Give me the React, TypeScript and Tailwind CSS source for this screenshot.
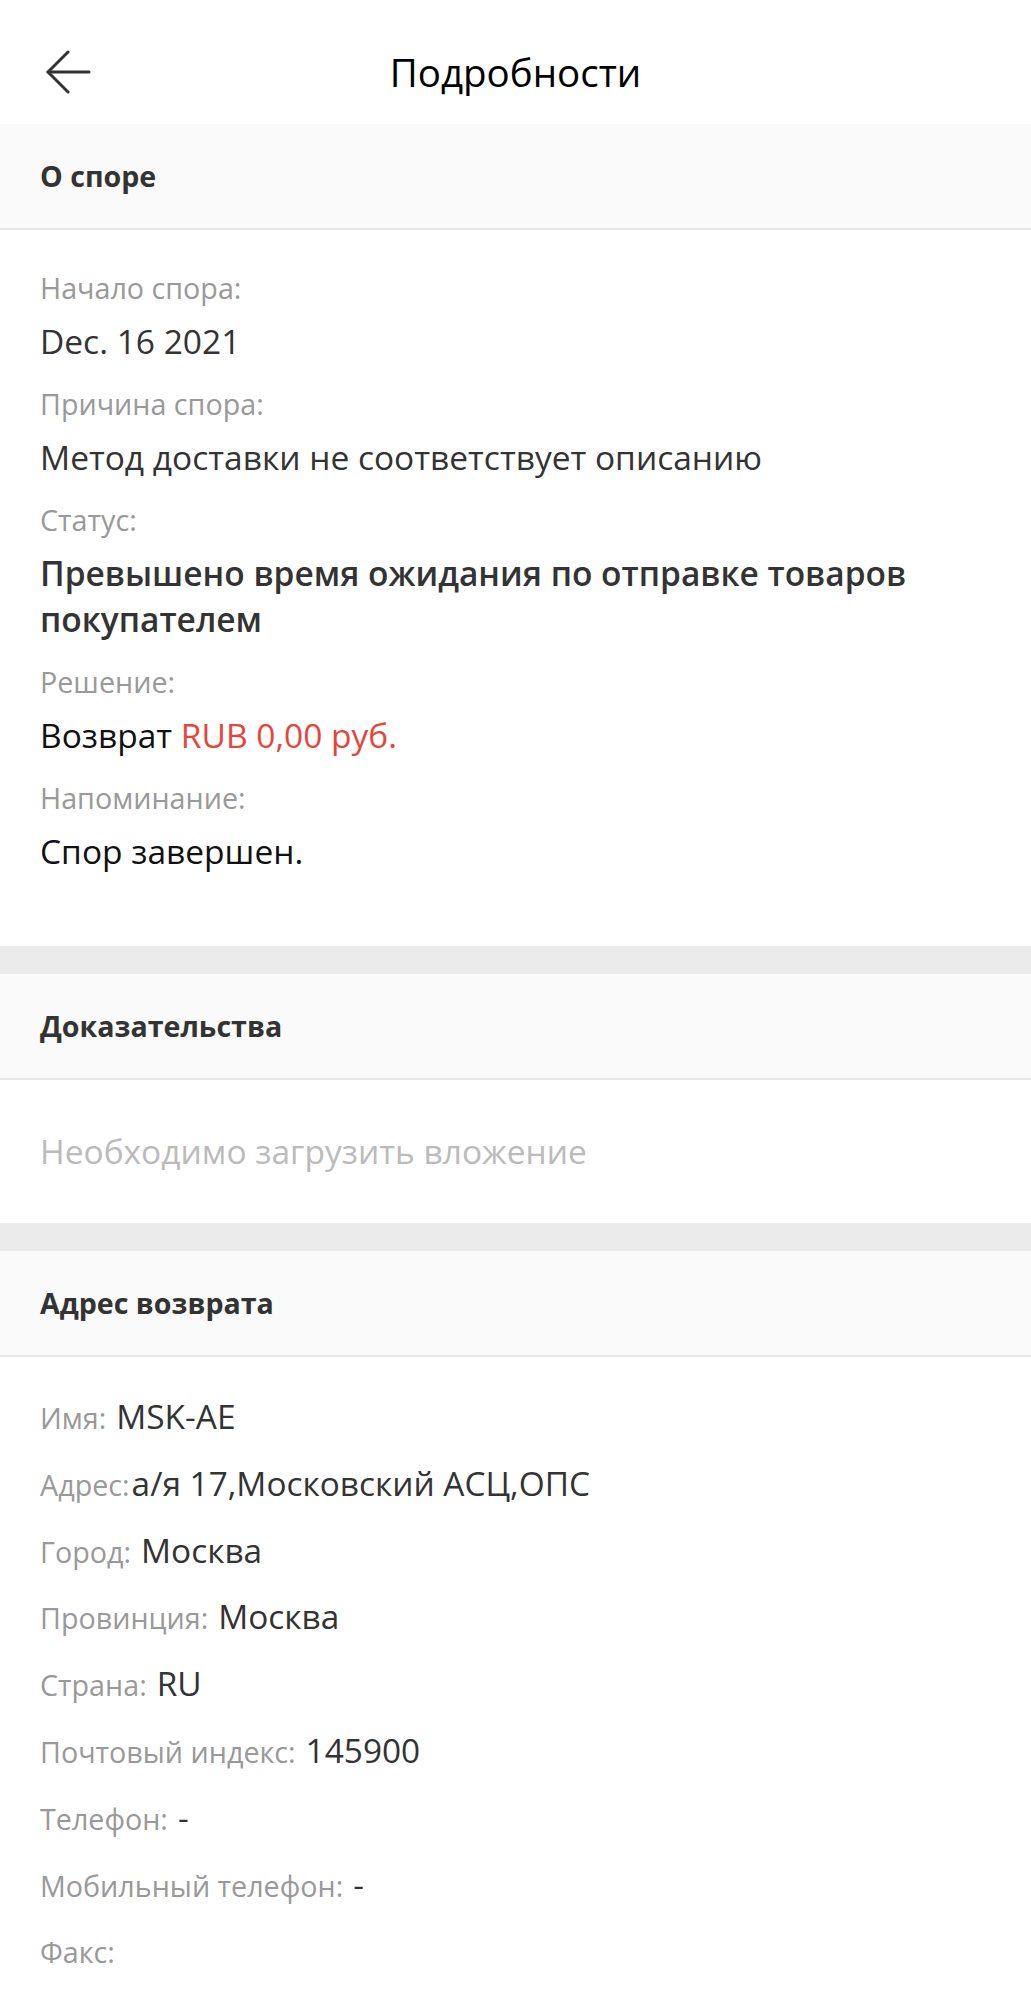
import React from "react";

const Label = ({ children }: { children: React.ReactNode }) => (
  <div className="text-[28.7px] leading-[44px] text-[#999999]">{children}</div>
);

const SectionHeader = ({ title }: { title: string }) => (
  <div className="h-[106px] bg-[#fafafa] border-b-2 border-[#e8e8e8] px-[40px] flex items-center">
    <span className="text-[28.6px] font-bold text-[#333333]">{title}</span>
  </div>
);

const Band = () => <div className="h-[28px] bg-[#ebebeb]" />;

const AddrRow = ({ label, value, tight }: { label: string; value: string; tight?: boolean }) => (
  <div className="text-[28.7px] leading-[66.8px] whitespace-nowrap">
    <span className="leading-none text-[#999999]">{label}</span>
    <span className={(tight ? "ml-[2px] " : "ml-[10px] ") + "leading-none text-[33.4px] text-[#333333]"}>{value}</span>
  </div>
);

export default function App() {
  return (
    <div className="w-[1031px] bg-white font-['Open_Sans',sans-serif]">
      {/* Top bar */}
      <div className="relative h-[124px] flex justify-center pt-[47px]">
        <svg
          className="absolute left-[45px] top-[49px]"
          width="47"
          height="45"
          viewBox="-2 -2 47 45"
          fill="none"
          stroke="#333333"
          strokeWidth="3"
          strokeLinecap="round"
          strokeLinejoin="round"
        >
          <path d="M1 21 H42" />
          <path d="M21 1 L1 21 L21 41" />
        </svg>
        <h1 className="text-[38.5px] leading-[50px] text-black">Подробности</h1>
      </div>

      {/* О споре */}
      <SectionHeader title="О споре" />
      <div className="px-[40px] pt-[36px] pb-[72px]">
        <Label>Начало спора:</Label>
        <div className="mt-[8px] mb-[18px] text-[33.5px] leading-[46px] text-[#333333]">Dec. 16 2021</div>
        <Label>Причина спора:</Label>
        <div className="mt-[8px] mb-[18px] text-[33.5px] leading-[46px] text-[#333333]">
          Метод доставки не соответствует описанию
        </div>
        <Label>Статус:</Label>
        <div className="mt-[8px] mb-[18px] text-[33.5px] leading-[46px] font-semibold text-[#333333]">
          Превышено время ожидания по отправке товаров покупателем
        </div>
        <Label>Решение:</Label>
        <div className="mt-[8px] mb-[18px] text-[33.5px] leading-[46px] text-[#111111]">
          Возврат <span className="text-[#e4463c]">RUB 0,00 руб.</span>
        </div>
        <Label>Напоминание:</Label>
        <div className="mt-[8px] text-[33.5px] leading-[46px] text-[#111111]">Спор завершен.</div>
      </div>

      <Band />

      {/* Доказательства */}
      <SectionHeader title="Доказательства" />
      <div className="h-[143px] px-[40px] flex items-center">
        <span className="text-[33.5px] text-[#bbbbbb]">Необходимо загрузить вложение</span>
      </div>

      <Band />

      {/* Адрес возврата */}
      <SectionHeader title="Адрес возврата" />
      <div className="px-[40px] pt-[28px] pb-[20px]">
        <AddrRow label="Имя:" value="MSK-AE" />
        <AddrRow label="Адрес:" value="а/я 17,Московский АСЦ,ОПС" tight />
        <AddrRow label="Город:" value="Москва" />
        <AddrRow label="Провинция:" value="Москва" />
        <AddrRow label="Страна:" value="RU" />
        <AddrRow label="Почтовый индекс:" value="145900" />
        <AddrRow label="Телефон:" value="-" />
        <AddrRow label="Мобильный телефон:" value="-" />
        <AddrRow label="Факс:" value="" />
      </div>
    </div>
  );
}
